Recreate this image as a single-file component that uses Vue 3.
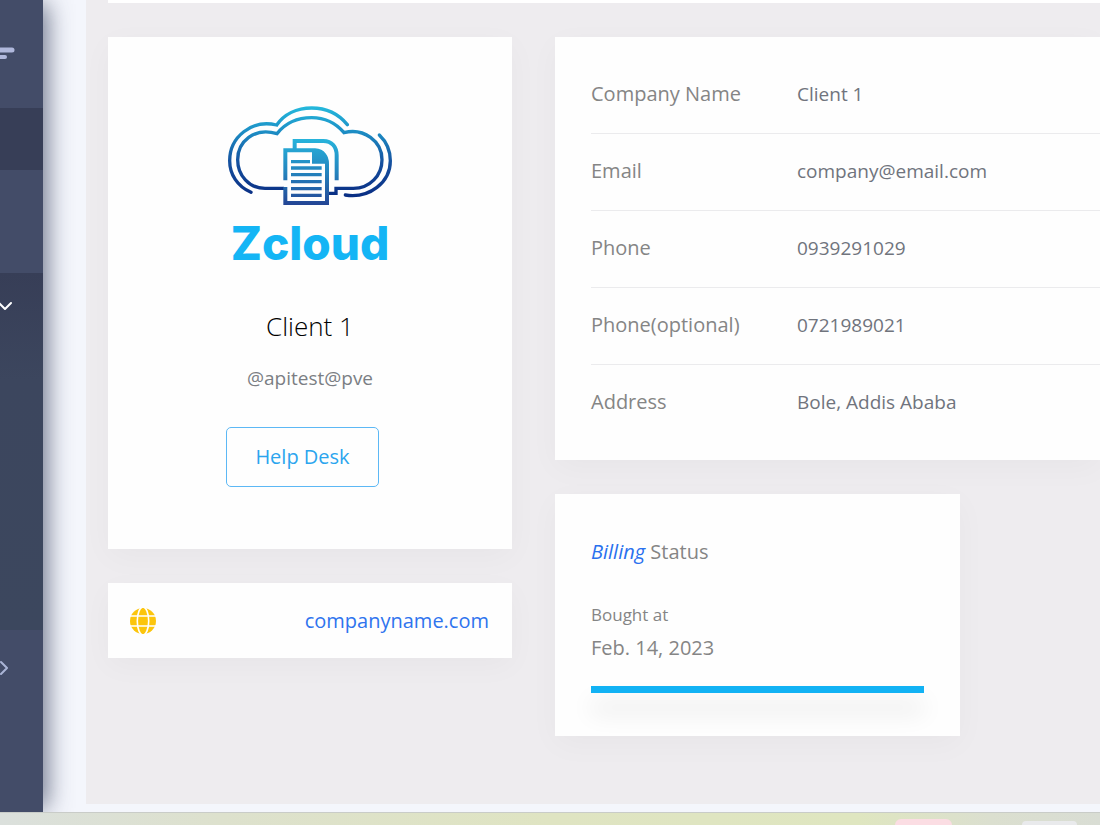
<template>
  <div class="app">
    <div class="shell">
      <nav class="sidebar" aria-label="Main menu">
        <button type="button" class="side-item side-top" aria-label="Toggle menu">
          <svg class="icon-menu" width="16" height="14" viewBox="0 0 16 14">
            <path d="M-4 3H12" stroke-width="5" />
            <path d="M-4 10H5" stroke-width="4" />
          </svg>
        </button>
        <a href="#" class="side-item side-active" aria-label="Dashboard"></a>
        <a href="#" class="side-item side-link" aria-label="Services"></a>
        <button type="button" class="side-item side-open" aria-label="Collapse group">
          <svg class="icon-down" width="13" height="10" viewBox="0 0 13 10">
            <path d="M-1 2L5 8L11 2" />
          </svg>
        </button>
        <button type="button" class="side-item side-rest" aria-label="Expand group">
          <svg class="icon-right" width="10" height="16" viewBox="0 0 10 16">
            <path d="M1 2L7 8L1 14" />
          </svg>
        </button>
      </nav>

      <main class="content">
        <div class="top-strip"></div>
        <div class="columns">
          <div class="column">
            <section class="card profile">
              <svg class="logo" width="170" height="107" viewBox="45 35 510 321">
                <defs>
                  <linearGradient id="cloud" gradientUnits="userSpaceOnUse" x1="0" y1="50" x2="0" y2="330">
                    <stop offset="0" stop-color="#24b8dc" />
                    <stop offset=".25" stop-color="#1d90c6" />
                    <stop offset=".6" stop-color="#15509f" />
                    <stop offset="1" stop-color="#082a80" />
                  </linearGradient>
                  <linearGradient id="doc" gradientUnits="userSpaceOnUse" x1="0" y1="145" x2="0" y2="345">
                    <stop offset="0" stop-color="#27b4dc" />
                    <stop offset=".5" stop-color="#2484be" />
                    <stop offset="1" stop-color="#234494" />
                  </linearGradient>
                </defs>
                <g fill="none" stroke="url(#cloud)" stroke-width="10">
                  <path stroke-linecap="round" d="M123 306C82 288 59 252 59 211C59 140 125 86 200 104C222 72 260 53 305 53C348 53 386 71 412 103" />
                  <path d="M222 294H165C117 294 83 255 83 208C83 155 132 109 201 130C227 97 262 82 305 82C345 82 378 99 402 127C462 112 516 153 516 208C516 255 480 294 430 294H378V309H357" />
                  <path stroke-linecap="round" d="M508 134C531 156 541 181 541 211C541 276 479 325 406 314" />
                </g>
                <g fill="none" stroke="url(#doc)">
                  <path stroke-width="12" d="M254 176V152H340C366 152 380 170 380 195V270" />
                  <path stroke-width="12" d="M226 270V180H315C340 182 351 199 351 222V338H226V290" />
                  <path stroke-width="10" d="M243 214.01L300 214M243 233.01L335 233M243 253.01L335 253M243 274.01L335 274M243 295.01L335 295M243 315.01L335 315" />
                </g>
                <path fill="url(#doc)" d="M306 176H318C345 182 356 202 356 220H306Z" />
              </svg>
              <div class="logo-name">Zcloud</div>
              <h1 class="client-name">Client 1</h1>
              <p class="client-handle">@apitest@pve</p>
              <button type="button" class="help-btn">Help Desk</button>
            </section>

            <section class="card website">
              <svg width="26" height="26" viewBox="0 0 26 26">
                <circle cx="13" cy="13" r="13" fill="#fcc50c" />
                <g fill="none" stroke="#fff" stroke-width="1.6">
                  <ellipse cx="13" cy="13" rx="5.7" ry="14" />
                  <path d="M0 8H26M0 18H26" />
                </g>
              </svg>
              <a href="#">companyname.com</a>
            </section>
          </div>

          <div class="column">
            <dl class="card details">
              <div v-for="row in details" :key="row.label" class="detail-row">
                <dt>{{ row.label }}</dt>
                <dd>{{ row.value }}</dd>
              </div>
            </dl>

            <section class="card billing">
              <h2 class="billing-title"><i>Billing</i> Status</h2>
              <p class="billing-label">Bought at</p>
              <p class="billing-date">Feb. 14, 2023</p>
              <div class="billing-bar"></div>
            </section>
          </div>
        </div>
      </main>
    </div>

    <footer class="taskbar">
      <span class="task task-pink"></span>
      <span class="task task-grey"></span>
    </footer>
  </div>
</template>

<script setup>
const details = [
  { label: 'Company Name', value: 'Client 1' },
  { label: 'Email', value: 'company@email.com' },
  { label: 'Phone', value: '0939291029' },
  { label: 'Phone(optional)', value: '0721989021' },
  { label: 'Address', value: 'Bole, Addis Ababa' }
]
</script>

<style>
body { margin: 0; }
</style>

<style scoped>
.app {
  display: flex; flex-direction: column;
  min-height: 100vh;
  font-family: "Open Sans", "Noto Sans", sans-serif;
  font-size: 20px; line-height: 28px;
  color: #858585;
  background: #f4f6fc;
}

.app * { box-sizing: border-box; }

.shell { display: flex; flex: 1; overflow: hidden; }

/* sidebar */
.sidebar {
  position: relative; z-index: 1;
  display: flex; flex-direction: column;
  flex: 0 0 43px;
  background: #434c68;
  box-shadow: 8px 0 24px -4px rgba(50, 60, 90, .7);
}

.side-item {
  display: flex; align-items: flex-start;
  width: 100%; padding: 0; border: 0;
  background: #434c68;
}
.side-item svg { display: block; fill: none; stroke-linecap: round; stroke-linejoin: round; }
.side-top { height: 108px; padding-top: 47px; }
.side-active { height: 62px; background: #373e57; }
.side-link { height: 103px; }
.side-open {
  height: 357px; padding-top: 28px;
  background: linear-gradient(#373e57, #3c465e 30%, #3c475e);
}
.side-rest { flex: 1; padding-top: 30px; }

.icon-menu { stroke: #b0b8dc; }
.icon-down { stroke: #fff; stroke-width: 2; }
.icon-right { stroke: #aab4d6; stroke-width: 2; }

/* page */
.content {
  flex: 1; min-width: 0;
  margin: 0 0 8px 43px;
  padding-left: 22px;
  background: #eeecef;
}

.top-strip { height: 3px; margin-bottom: 34px; background: #fff; }

.columns {
  display: grid;
  grid-template-columns: minmax(0, 404fr) minmax(0, 545fr);
  gap: 43px;
  padding-bottom: 34px;
}

.column { display: flex; flex-direction: column; gap: 34px; }

.card {
  margin: 0;
  background: #fefefe;
  box-shadow: 0 8px 30px rgba(0, 0, 0, .03);
}

.profile {
  display: flex; flex-direction: column; align-items: center;
  padding: 65px 24px 62px;
}

.logo-name {
  margin-top: 6px;
  font-family: Inter, "Open Sans", sans-serif;
  font-size: 46px; font-weight: 800; line-height: 56px;
  color: #14b5f5;
}

.client-name {
  margin: 37px 0 20px;
  font-size: 26px; font-weight: 300; line-height: 36px;
  color: #000;
}

.client-handle { margin: 0; font-size: 19px; color: #7b7e84; }

.help-btn {
  height: 60px; margin: 35px 15px 0 0; padding: 0 28px;
  font: inherit; color: #2ba5ee;
  background: transparent;
  border: 1px solid #5cb8f5; border-radius: 5px;
}

.website {
  display: flex; align-items: center; justify-content: space-between;
  height: 75px; padding: 0 23px 0 22px;
}
.website a { color: #2f74ee; text-decoration: none; }

.details { padding: 20px 0 20px 36px; }

.detail-row {
  display: flex; align-items: center;
  height: 77px; padding-bottom: 2px;
  border-bottom: 1px solid #ebebed;
}
.detail-row:last-child { height: 75px; border-bottom: 0; }
.detail-row dt { flex: 0 0 206px; }
.detail-row dd { margin: 0; font-size: 19px; color: #70747d; }

.billing { width: 100%; max-width: 405px; padding: 44px 36px 43px; }

.billing-title { margin: 0 0 37px; font-size: 20px; font-weight: 400; }
.billing-title i { color: #2970ee; }

.billing-label { margin: 0 0 7px; font-size: 17px; line-height: 24px; }
.billing-date { margin: 0 0 24px; }

.billing-bar {
  height: 7px;
  background: #12b2f4;
  box-shadow: 0 18px 24px rgba(0, 0, 0, .14);
}

/* strip under the page */
.taskbar {
  display: flex; align-items: flex-end; justify-content: flex-end; gap: 70px;
  height: 13px; padding-right: 23px;
  border-top: 1px solid #c9ccc8;
  background: linear-gradient(90deg, #dbe0dc, #dde1cd 20%, #dfe4c2 50%, #dfe6c0 78%, #dbdfcf 90%, #d9ddd4);
}
.task { border-radius: 6px 6px 0 0; }
.task-pink { width: 57px; height: 6px; background: #fbdde3; }
.task-grey { width: 55px; height: 4px; background: #e9eaec; }
</style>
